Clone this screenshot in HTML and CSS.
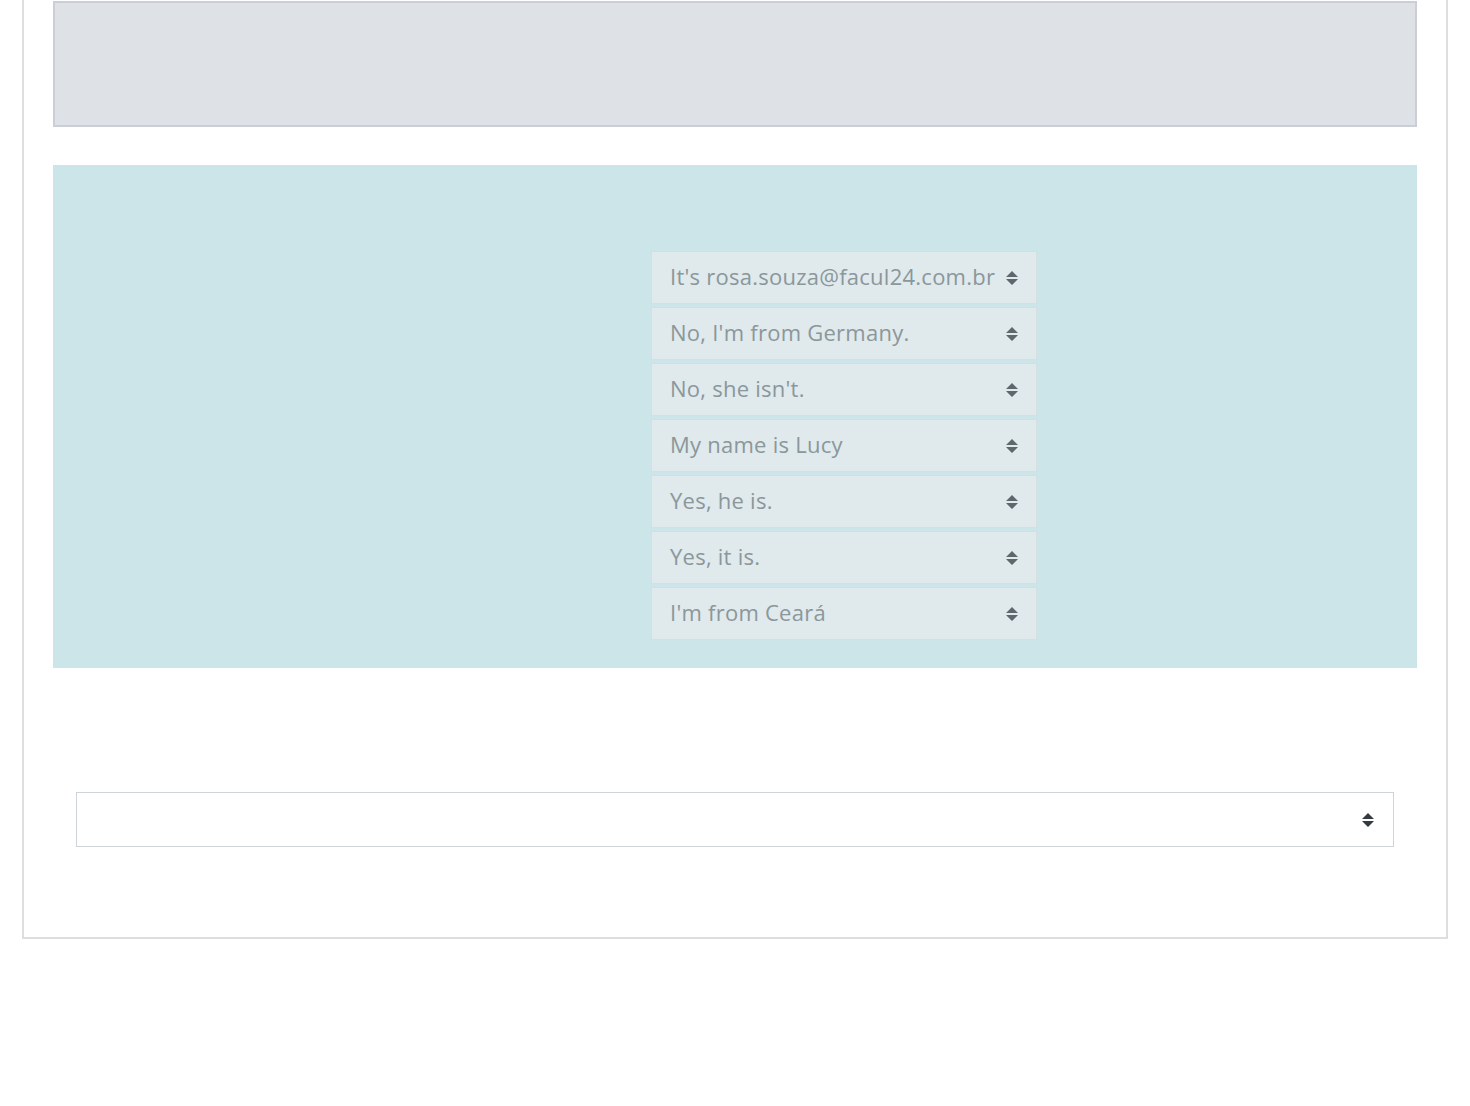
FILE: index.html
```html
<!DOCTYPE html>
<html lang="en">
<head>
<meta charset="utf-8">
<title>Matching</title>
<link rel="stylesheet" href="styles.css">
</head>
<body>
<div class="card">
  <div class="grey-box"></div>
  <div class="match-panel">
    <div class="answers">
      <div class="choice"><span class="choice-text">It's rosa.souza@facul24.com.br</span><svg class="caret" viewBox="0 0 12 14" width="12" height="14"><path d="M6 0L12 6H0Z M0 8H12L6 14Z" fill="currentColor"/></svg></div>
      <div class="choice"><span class="choice-text">No, I'm from Germany.</span><svg class="caret" viewBox="0 0 12 14" width="12" height="14"><path d="M6 0L12 6H0Z M0 8H12L6 14Z" fill="currentColor"/></svg></div>
      <div class="choice"><span class="choice-text">No, she isn't.</span><svg class="caret" viewBox="0 0 12 14" width="12" height="14"><path d="M6 0L12 6H0Z M0 8H12L6 14Z" fill="currentColor"/></svg></div>
      <div class="choice"><span class="choice-text">My name is Lucy</span><svg class="caret" viewBox="0 0 12 14" width="12" height="14"><path d="M6 0L12 6H0Z M0 8H12L6 14Z" fill="currentColor"/></svg></div>
      <div class="choice"><span class="choice-text">Yes, he is.</span><svg class="caret" viewBox="0 0 12 14" width="12" height="14"><path d="M6 0L12 6H0Z M0 8H12L6 14Z" fill="currentColor"/></svg></div>
      <div class="choice"><span class="choice-text">Yes, it is.</span><svg class="caret" viewBox="0 0 12 14" width="12" height="14"><path d="M6 0L12 6H0Z M0 8H12L6 14Z" fill="currentColor"/></svg></div>
      <div class="choice"><span class="choice-text">I'm from Ceará</span><svg class="caret" viewBox="0 0 12 14" width="12" height="14"><path d="M6 0L12 6H0Z M0 8H12L6 14Z" fill="currentColor"/></svg></div>
    </div>
  </div>
  <div class="bottom-select"><svg class="caret dark" viewBox="0 0 12 14" width="12" height="14"><path d="M6 0L12 6H0Z M0 8H12L6 14Z" fill="currentColor"/></svg></div>
</div>
</body>
</html>
```

FILE: styles.css
```css
html, body {
  margin: 0;
  padding: 0;
  background: #ffffff;
}

body {
  font-family: "Open Sans", "Liberation Sans", sans-serif;
}

.card {
  margin: 0 22px;
  border: 2px solid #dedede;
  border-top: none;
  padding: 1px 29px 90px;
}

.grey-box {
  height: 122px;
  background: #dee1e6;
  border: 2px solid #cbced6;
}

.match-panel {
  margin-top: 38px;
  background: #cce5e9;
  padding: 86px 0 28px 598px;
}

.answers {
  display: flex;
  flex-direction: column;
  gap: 3px;
  width: 386px;
}

.choice {
  height: 51px;
  box-sizing: content-box;
  background: #e0e9ec;
  border: 1px solid #d3dfe3;
  display: flex;
  align-items: center;
  justify-content: space-between;
  padding: 0 18px 0 18px;
}

.choice-text {
  font-size: 22px;
  letter-spacing: 0.25px;
  color: #8a979b;
  white-space: nowrap;
  padding-bottom: 3px;
}

.caret {
  color: #5d686c;
  flex: none;
}

.caret.dark {
  color: #343a40;
}

.bottom-select {
  margin: 124px 23px 0;
  height: 53px;
  border: 1px solid #ced4da;
  display: flex;
  align-items: center;
  justify-content: flex-end;
  padding-right: 19px;
}
```
